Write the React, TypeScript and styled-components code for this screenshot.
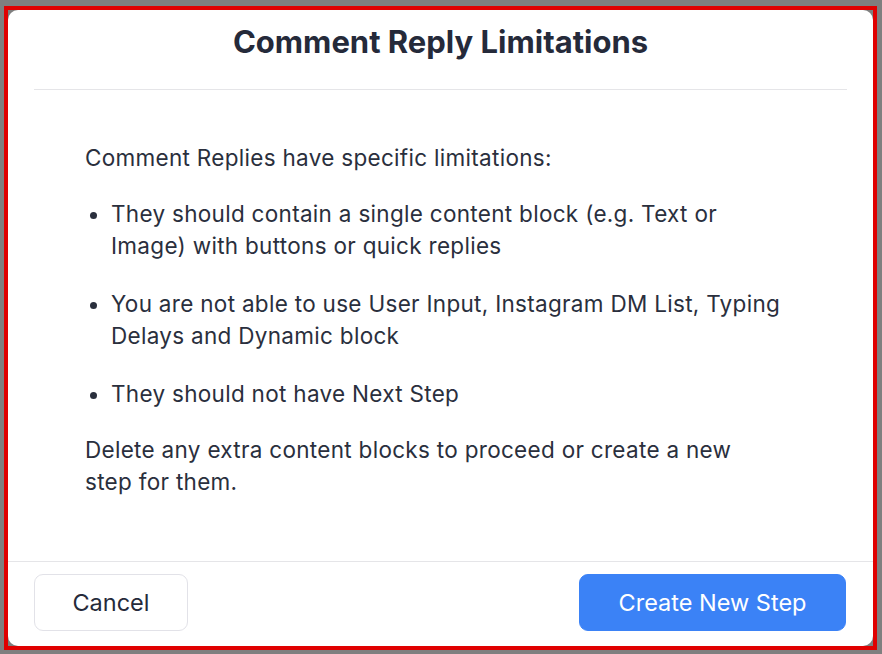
import React from "react";
import styled, { createGlobalStyle } from "styled-components";

const Global = createGlobalStyle`
  html, body { margin: 0; padding: 0; }
  body {
    background: #7f7f7f;
    font-family: Inter, "Noto Sans", sans-serif;
    width: 882px;
    height: 654px;
    overflow: hidden;
  }
`;

const Page = styled.div`
  width: 882px;
  height: 654px;
  padding: 6px 0 0 4px;
  box-sizing: border-box;
`;

const Frame = styled.div`
  width: 873px;
  height: 644px;
  box-sizing: border-box;
  border: 4px solid #e00000;
  display: flex;
`;

const Modal = styled.div`
  flex: 1;
  background: #ffffff;
  border-radius: 10px;
  display: flex;
  flex-direction: column;
  overflow: hidden;
`;

const Header = styled.div`
  margin: 0 26px;
  height: 80px;
  border-bottom: 1px solid #e5e5e8;
  display: flex;
  align-items: flex-start;
  justify-content: center;
  padding-top: 13px;
  box-sizing: border-box;
`;

const Title = styled.h1`
  margin: 0;
  font-size: 31px;
  line-height: 38px;
  font-weight: 700;
  color: #252a3a;
`;

const Body = styled.div`
  flex: 1;
  padding: 52px 91px 0 77px;
  color: #2a2f3d;
  font-size: 22.5px;
  letter-spacing: 0.3px;
  line-height: 32px;
`;

const Para = styled.p`
  margin: 0 0 24px 0;
`;

const List = styled.ul`
  margin: 0 0 24px 0;
  padding: 0 0 0 26px;
`;

const Item = styled.li`
  margin: 0 0 26px 0;
  &:last-child { margin-bottom: 0; }
`;

const Footer = styled.div`
  border-top: 1px solid #e5e5e8;
  height: 85px;
  box-sizing: border-box;
  padding: 12px 27px 0 26px;
  display: flex;
  justify-content: space-between;
  align-items: flex-start;
`;

const Button = styled.button<{ $primary?: boolean }>`
  height: 57px;
  width: ${(p) => (p.$primary ? "267px" : "154px")};
  border-radius: 9px;
  font-family: Inter, "Noto Sans", sans-serif;
  font-size: 23.5px;
  font-weight: 400;
  cursor: pointer;
  border: 1px solid ${(p) => (p.$primary ? "#3b82f6" : "#e2e2e8")};
  background: ${(p) => (p.$primary ? "#3b82f6" : "#ffffff")};
  color: ${(p) => (p.$primary ? "#ffffff" : "#252a3a")};
`;

export default function App() {
  return (
    <Page>
      <Global />
      <Frame>
        <Modal>
          <Header>
            <Title>Comment Reply Limitations</Title>
          </Header>
          <Body>
            <Para>Comment Replies have specific limitations:</Para>
            <List>
              <Item>
                They should contain a single content block (e.g. Text or Image)
                with buttons or quick replies
              </Item>
              <Item>
                You are not able to use User Input, Instagram DM List, Typing
                Delays and Dynamic block
              </Item>
              <Item>They should not have Next Step</Item>
            </List>
            <Para>
              Delete any extra content blocks to proceed or create a new step
              for them.
            </Para>
          </Body>
          <Footer>
            <Button>Cancel</Button>
            <Button $primary>Create New Step</Button>
          </Footer>
        </Modal>
      </Frame>
    </Page>
  );
}
